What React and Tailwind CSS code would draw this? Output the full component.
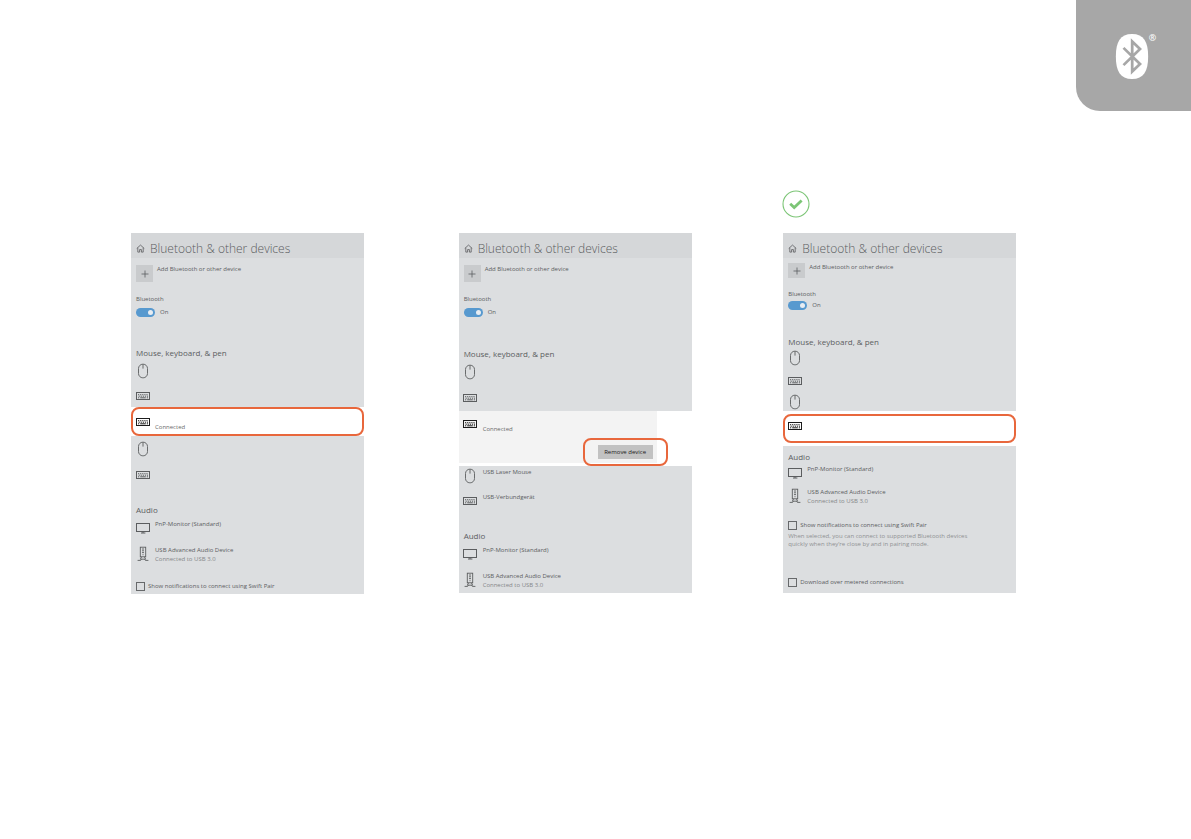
import React, { useId } from 'react';

function HomeIcon() {
  return (
    <svg viewBox="0 0 10 10" className="w-[9px] h-[9px] shrink-0" fill="none" stroke="currentColor" strokeWidth="0.9">
      <path d="M0.8 5 L5 1.2 L9.2 5 M2 4.2 V9 H4 V6.2 H6 V9 H8 V4.2" />
    </svg>
  );
}

function MouseIcon() {
  return (
    <svg viewBox="0 0 12 16" className="w-[12px] h-[16px]" fill="none" stroke="currentColor" strokeWidth="0.9">
      <rect x="1.5" y="1.2" width="9" height="13.6" rx="4.3" />
      <path d="M6 1.2 V5.6" />
    </svg>
  );
}

function KeyboardIcon() {
  return (
    <svg viewBox="0 0 14 10" className="w-[14px] h-[10px]" fill="none" stroke="currentColor" strokeWidth="1">
      <rect x="0.5" y="1.5" width="13" height="7" />
      <path d="M2 3.7 H12" strokeDasharray="1.2 0.9" />
      <path d="M2.6 5.2 H12" strokeDasharray="1.2 0.9" />
      <path d="M2 6.8 H3.2 M4.2 6.8 H9.8 M10.8 6.8 H12" />
    </svg>
  );
}

function MonitorIcon() {
  return (
    <svg viewBox="0 0 14 12" className="w-[14px] h-[12px]" fill="none" stroke="currentColor" strokeWidth="1">
      <rect x="0.5" y="1.5" width="13" height="8" />
      <path d="M7 9.5 V11 M5 11 H9.4" />
    </svg>
  );
}

function AudioIcon() {
  return (
    <svg viewBox="0 0 12 16" className="w-[12px] h-[16px]" fill="none" stroke="currentColor" strokeWidth="0.9">
      <rect x="3.3" y="1.2" width="5.4" height="9.6" />
      <path d="M5 3 H7 M5 4.8 H7 M5 6.6 H7 M6 8.2 V9.2 M4.6 10.8 L3.4 13.2 H8.6 L7.4 10.8 M0.6 14.4 H3.6 L4.4 13.2 M11.4 14.4 H8.4 L7.6 13.2" />
    </svg>
  );
}

const icons = {
  mouse: MouseIcon,
  keyboard: KeyboardIcon,
  monitor: MonitorIcon,
  audio: AudioIcon,
};

function Device({ icon, name, status, active, className = 'h-[26px]' }) {
  const Icon = icons[icon];
  return (
    <div className={`flex items-center pl-[4px] ${active ? 'text-[#1c1c1c]' : 'text-[#5b5d5f]'} ${className}`}>
      <div className="w-[15px] flex justify-center shrink-0">
        <Icon />
      </div>
      <div className="h-[16px] pl-[5px] text-[6px] leading-[9px] whitespace-nowrap">
        <p className="h-[9px] text-[#5b5d5f]">{name}</p>
        <p className={`h-[9px] ${active ? 'text-[#6b6b6b]' : 'text-[#858789]'}`}>{status}</p>
      </div>
    </div>
  );
}

function PanelTop({ compact }) {
  const id = useId();
  return (
    <>
      <header className="h-[25px] pt-[6px] pl-[5px] flex items-center gap-[5px] bg-[#d5d7d9] text-[#5b5d5f]">
        <HomeIcon />
        <h2 className="text-[12px] leading-[16px] font-light whitespace-nowrap">Bluetooth &amp; other devices</h2>
      </header>
      <button
        type="button"
        className={`flex items-start pl-[5px] gap-[4px] text-[6px] leading-[9px] text-[#5b5d5f] ${compact ? 'mt-[5px]' : 'mt-[7px]'}`}
      >
        <span className={`w-[17px] flex items-center justify-center bg-[#c9cbcd] ${compact ? 'h-[15px]' : 'h-[17px]'}`}>
          <svg viewBox="0 0 8 8" className="w-[8px] h-[8px]" stroke="currentColor" strokeWidth="0.8">
            <path d="M4 0.5 V7.5 M0.5 4 H7.5" />
          </svg>
        </span>
        Add Bluetooth or other device
      </button>
      <div className={`pl-[5px] text-[6px] leading-[9px] text-[#5b5d5f] ${compact ? 'pt-[12px]' : 'pt-[13px]'}`}>
        <label htmlFor={id} className="block">Bluetooth</label>
        <div className={`flex items-center gap-[5px] ${compact ? 'mt-[2px]' : 'mt-[4px]'}`}>
          <input
            id={id}
            type="checkbox"
            role="switch"
            defaultChecked
            className="appearance-none w-[19px] h-[9px] rounded-full bg-[#5799cf] flex items-center justify-end pr-[2px] before:w-[5px] before:h-[5px] before:rounded-full before:bg-[#e8edf2]"
          />
          <span>On</span>
        </div>
      </div>
    </>
  );
}

function GroupTitle({ children, className = '' }) {
  return (
    <h3 className={`pl-[5px] text-[8px] leading-[10px] text-[#5b5d5f] whitespace-nowrap ${className}`}>{children}</h3>
  );
}

function Option({ children }) {
  return (
    <label className="flex items-center pl-[5px] gap-[3px] h-[10px] text-[6px] leading-[9px] text-[#5b5d5f] whitespace-nowrap">
      <input type="checkbox" className="appearance-none w-[9px] h-[9px] border border-[#67696b]" />
      {children}
    </label>
  );
}

function ConnectedStep() {
  return (
    <section className="w-full max-w-[233px] bg-[#dcdee0]">
      <PanelTop />
      <GroupTitle className="mt-[31px]">Mouse, keyboard, &amp; pen</GroupTitle>
      <Device icon="mouse" />
      <Device icon="keyboard" className="h-[23px]" />
      <div className="bg-white">
        <div className="h-[29px] border-2 border-[#e8673c] rounded-[8px] flex items-center">
          <Device icon="keyboard" status="Connected" active className="-ml-[2px]" />
        </div>
      </div>
      <Device icon="mouse" />
      <Device icon="keyboard" />
      <GroupTitle className="mt-[17px]">Audio</GroupTitle>
      <Device icon="monitor" name="PnP-Monitor (Standard)" />
      <Device icon="audio" name="USB Advanced Audio Device" status="Connected to USB 3.0" />
      <div className="pt-[14px] pb-[3px]">
        <Option>Show notifications to connect using Swift Pair</Option>
      </div>
    </section>
  );
}

function RemoveStep() {
  return (
    <section className="w-full max-w-[233px]">
      <div className="bg-[#dcdee0]">
        <PanelTop />
        <GroupTitle className="mt-[32px]">Mouse, keyboard, &amp; pen</GroupTitle>
        <Device icon="mouse" />
        <Device icon="keyboard" />
      </div>
      <div className="w-[198px] h-[52px] bg-[#f3f3f3]">
        <Device icon="keyboard" status="Connected" active />
        <div className="flex justify-end pr-[4px] pt-[8px]">
          <div className="relative">
            <button type="button" className="block w-[55px] h-[14px] bg-[#c2c2c2] text-[6px] leading-[14px] text-[#1c1c1c] whitespace-nowrap">
              Remove device
            </button>
            <div className="absolute -inset-x-[15px] -inset-y-[7px] border-2 border-[#e8673c] rounded-[8px] pointer-events-none" />
          </div>
        </div>
      </div>
      <div className="mt-[3px] bg-[#dcdee0]">
        <Device icon="mouse" name="USB Laser Mouse" className="h-[19px]" />
        <Device icon="keyboard" name="USB-Verbundgerät" className="h-[31px]" />
        <GroupTitle className="mt-[15px]">Audio</GroupTitle>
        <Device icon="monitor" name="PnP-Monitor (Standard)" />
        <Device icon="audio" name="USB Advanced Audio Device" status="Connected to USB 3.0" />
      </div>
    </section>
  );
}

function RemovedStep() {
  return (
    <section className="w-full max-w-[233px]">
      <div className="bg-[#dcdee0]">
        <PanelTop compact />
        <GroupTitle className="mt-[27px]">Mouse, keyboard, &amp; pen</GroupTitle>
        <Device icon="mouse" className="h-[22px]" />
        <Device icon="keyboard" className="h-[24px]" />
        <Device icon="mouse" className="h-[18px]" />
      </div>
      <div className="mt-[3px] h-[29px] border-2 border-[#e8673c] rounded-[8px] flex items-start">
        <Device icon="keyboard" active className="-ml-[2px] h-[20px]" />
      </div>
      <div className="mt-[3px] pt-[6px] bg-[#dcdee0]">
        <GroupTitle>Audio</GroupTitle>
        <Device icon="monitor" name="PnP-Monitor (Standard)" className="h-[21px]" />
        <Device icon="audio" name="USB Advanced Audio Device" status="Connected to USB 3.0" />
        <div className="pt-[11px] pb-[6px]">
          <Option>Show notifications to connect using Swift Pair</Option>
          <p className="pl-[5px] pt-[2px] text-[6px] leading-[8px] text-[#8f9193] whitespace-nowrap">
            When selected, you can connect to supported Bluetooth devices
            <br />
            quickly when they’re close by and in pairing mode.
          </p>
          <div className="pt-[29px]">
            <Option>Download over metered connections</Option>
          </div>
        </div>
      </div>
    </section>
  );
}

function BluetoothBadge() {
  return (
    <div className="w-[115px] h-[111px] bg-[#a7a7a7] rounded-bl-[24px] flex items-start justify-center pt-[34px] pl-[4px] text-white">
      <svg viewBox="0 0 34 46" className="w-[34px] h-[45px]" aria-label="Bluetooth">
        <path fill="currentColor" d="M17 0 C29 0 33.5 8 33.5 23 C33.5 38 29 46 17 46 C5 46 0.5 38 0.5 23 C0.5 8 5 0 17 0 Z" />
        <path fill="none" stroke="#a7a7a7" strokeWidth="2.8" d="M8.3 14.2 L25.2 30.6 L17.2 38.3 V7.7 L25.2 15.4 L8.3 31.8" />
      </svg>
      <span className="text-[9px] leading-[8px] font-semibold">®</span>
    </div>
  );
}

export default function App() {
  return (
    <div className="min-h-screen bg-white font-['Open_Sans','Noto_Sans',sans-serif]">
      <div className="flex justify-end">
        <BluetoothBadge />
      </div>
      <div className="flex justify-end pt-[79px] pr-[381px]">
        <svg viewBox="0 0 28 28" className="w-[28px] h-[28px]" fill="none" aria-label="Done">
          <circle cx="14" cy="14" r="13" stroke="#7cc576" strokeWidth="1.1" />
          <path d="M8.2 13.8 L12.2 17.6 L19.6 10.4" stroke="#7cc576" strokeWidth="2.8" />
        </svg>
      </div>
      <main className="grid grid-cols-[328fr_325fr_233fr] items-start pl-[131px] pr-[175px] pt-[15px]">
        <ConnectedStep />
        <RemoveStep />
        <RemovedStep />
      </main>
    </div>
  );
}
